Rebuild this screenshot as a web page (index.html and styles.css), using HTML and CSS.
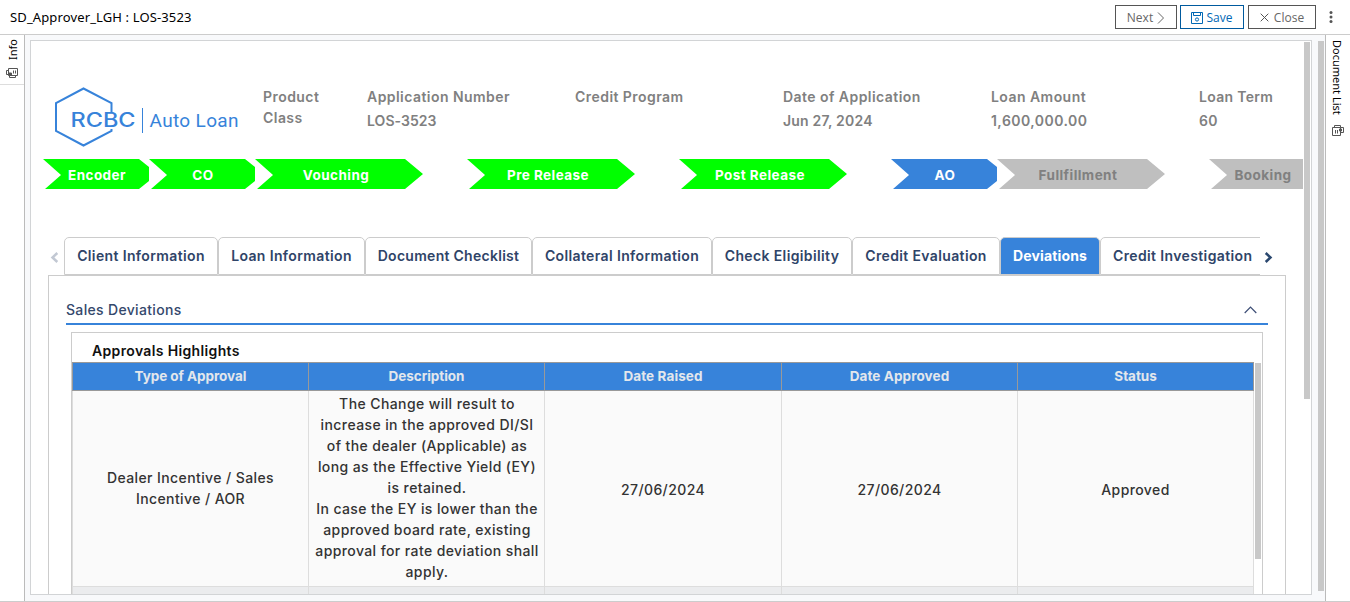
FILE: index.html
```html
<!DOCTYPE html>
<html lang="en">
<head>
<meta charset="utf-8">
<title>SD_Approver_LGH : LOS-3523</title>
<link rel="stylesheet" href="styles.css">
</head>
<body>
<header class="topbar">
  <h1 class="title">SD_Approver_LGH : LOS-3523</h1>
  <div class="actions">
    <button class="btn next"><span>Next</span><svg width="8" height="12" viewBox="0 0 8 12"><path d="M1 .5 6.5 6 1 11.5" fill="none" stroke="#666"/></svg></button>
    <button class="btn save"><svg width="12" height="12" viewBox="0 0 12 12" fill="none" stroke="#0068b5"><path d="M.5.5h11v11H.5zM2.5.5v3h7v-3"/><circle cx="6" cy="7.5" r="1.6"/></svg><span>Save</span></button>
    <button class="btn close"><svg width="9" height="9" viewBox="0 0 9 9"><path d="M.7.7l7.6 7.6M8.3.7.7 8.3" fill="none" stroke="#555"/></svg><span>Close</span></button>
    <svg class="more" width="4" height="12" viewBox="0 0 4 12" fill="#555"><circle cx="2" cy="1.6" r="1.5"/><circle cx="2" cy="6" r="1.5"/><circle cx="2" cy="10.4" r="1.5"/></svg>
  </div>
</header>
<div class="workspace">
  <aside class="side left">
    <div class="info-tab">
      <span class="vertical up">Info</span>
      <svg width="12" height="10" viewBox="0 0 12 10" fill="none" stroke="#555"><path d="M2.5.5h9v7h-9zM2.5 2.5h-2v4h3v3h6v-2M7.5 2.5v3M9.5 2.5v3"/><path d="M2.5 5h3v2h-3z" fill="#555"/></svg>
    </div>
  </aside>
  <main class="center">
    <div class="panel">
      <div class="content">
        <section class="summary">
          <svg class="logo" width="190" height="62" viewBox="0 0 190 62" role="img" aria-label="RCBC Auto Loan">
            <path d="M58.5 26V17L30.5 2.5 3 17v28l27.5 14.5L58.5 45v-2" fill="none" stroke="#3783da" stroke-width="2"/>
            <text class="logo-brand" x="17.5" y="41" textLength="65" lengthAdjust="spacingAndGlyphs">RCBC</text>
            <path d="M89.5 22v25" stroke="#3783da"/>
            <text class="logo-name" x="96.500" y="41" textLength="89">Auto Loan</text>
          </svg>
          <dl class="facts">
            <div class="f1"><dt>Product</dt><dd>Class</dd></div>
            <div class="f2"><dt>Application Number</dt><dd>LOS-3523</dd></div>
            <div class="f3"><dt>Credit Program</dt><dd></dd></div>
            <div class="f4"><dt>Date of Application</dt><dd>Jun 27, 2024</dd></div>
            <div class="f5"><dt>Loan Amount</dt><dd>1,600,000.00</dd></div>
            <div class="f6"><dt>Loan Term</dt><dd>60</dd></div>
          </dl>
        </section>
        <ol class="steps">
          <li class="step short done">Encoder</li>
          <li class="step short done">CO</li>
          <li class="step done">Vouching</li>
          <li class="step done">Pre Release</li>
          <li class="step done">Post Release</li>
          <li class="step short current">AO</li>
          <li class="step todo">Fullfillment</li>
          <li class="step short todo last">Booking</li>
        </ol>
        <nav class="tabs">
          <svg class="arrow" width="9" height="11" viewBox="0 0 9 11"><path d="M7.3 1 2.5 5.5 7.3 10" fill="none" stroke="#c2c8d3" stroke-width="2.5"/></svg>
          <div class="tab-strip">
            <a class="tab t1">Client Information</a>
            <a class="tab t2">Loan Information</a>
            <a class="tab t3">Document Checklist</a>
            <a class="tab t4">Collateral Information</a>
            <a class="tab t5">Check Eligibility</a>
            <a class="tab t6">Credit Evaluation</a>
            <a class="tab t7 active">Deviations</a>
            <a class="tab t8">Credit Investigation</a>
          </div>
          <svg class="arrow" width="9" height="11" viewBox="0 0 9 11"><path d="M1.7 1 6.5 5.5 1.7 10" fill="none" stroke="#2b486f" stroke-width="2.5"/></svg>
        </nav>
        <section class="tab-panel">
          <div class="section-head">
            <h2>Sales Deviations</h2>
            <svg width="13" height="8" viewBox="0 0 13 8"><path d="M.7 7 6.5 1.2 12.3 7" fill="none" stroke="#3c4d75" stroke-width="1.2"/></svg>
          </div>
          <div class="approvals">
            <h3>Approvals Highlights</h3>
            <div class="grid-wrap">
              <div class="grid">
                <div class="th first">Type of Approval</div><div class="th">Description</div><div class="th raised">Date Raised</div><div class="th raised">Date Approved</div><div class="th">Status</div>
                <div class="td type">Dealer Incentive / Sales<br>Incentive / AOR</div>
                <div class="td desc">The Change will result to<br>increase in the approved DI/SI<br>of the dealer (Applicable) as<br>long as the Effective Yield (EY)<br>is retained.<br>In case the EY is lower than the<br>approved board rate, existing<br>approval for rate deviation shall<br>apply.</div>
                <div class="td">27/06/2024</div>
                <div class="td">27/06/2024</div>
                <div class="td">Approved</div>
                <div class="td type alt"></div><div class="td alt"></div><div class="td alt"></div><div class="td alt"></div><div class="td alt"></div>
              </div>
              <div class="thumb grid-thumb"></div>
            </div>
          </div>
        </section>
      </div>
      <div class="thumb panel-thumb"></div>
    </div>
    <div class="thumb page-thumb"></div>
  </main>
  <aside class="side right">
    <span class="vertical">Document List</span>
    <svg width="12" height="11" viewBox="0 0 12 11" fill="none" stroke="#555"><path d="M.5 2.5h8v8h-8zM2.5 2.5v-2h6v2h3v5h-3M3.5 5v3.5M5.5 5v3.5"/><path d="M7.5 4h2v2h-2z" fill="#555"/></svg>
  </aside>
</div>
</body>
</html>
```
FILE: styles.css
```css
* { box-sizing: border-box; }
body, h1, h2, h3, dl, dd, ol { margin: 0; padding: 0; }
body { width: 1350px; height: 602px; overflow: hidden; background: #fff; display: flex; flex-direction: column; font-family: Inter, "Liberation Sans", sans-serif; font-size: 14px; }
svg { display: block; flex: none; }

.topbar { height: 35px; flex: none; display: flex; align-items: center; justify-content: space-between; padding: 0 17px 0 10px; border-bottom: 1px solid #ccc; font-family: "Noto Sans", sans-serif; }
.title { font-size: 13px; font-weight: 400; color: #000; line-height: 20px; letter-spacing: .13px; }
.actions { display: flex; align-items: center; gap: 3px; }
.btn { height: 24px; border: 1px solid #555; background: #fff; color: #666; font: 400 12px "Open Sans", sans-serif; display: flex; align-items: center; padding: 1px 0 0; justify-content: center; }
.btn.next { width: 62px; gap: 4px; }
.btn.save { width: 64px; gap: 4px; padding-right: 1px; color: #0068b5; border-color: #005a9e; }
.btn.close { width: 68px; gap: 5px; margin-left: 1px; }
.more { margin-left: 10px; }

.workspace { height: 567px; flex: none; display: flex; border-bottom: 1px solid #ccc; }
.side { width: 25px; flex: none; font: 11px "Noto Sans", sans-serif; display: flex; flex-direction: column; color: #000; }
.left { border-right: 1px solid #bbb; }
.right { border-left: 1px solid #bbb; align-items: flex-start; padding: 5px 0 0 6px; gap: 10px; }
.vertical { writing-mode: vertical-rl; line-height: 11px; }
.vertical.up { transform: rotate(180deg); }
.info-tab { height: 50px; border-bottom: 1px solid #ddd; display: flex; flex-direction: column; align-items: center; gap: 8px; padding-top: 4px; }

.center { width: 1300px; flex: none; background: #f8f9fb; display: flex; padding: 5px 0 6px 5px; }
.panel { width: 1282px; height: 555px; border: 1px solid #d2d4d6; background: #fff; display: flex; overflow: hidden; }
.content { width: 1272px; flex: none; height: 553px; overflow: hidden; padding-top: 45px; }
.thumb { width: 6px; background: #c8c8c8; flex: none; }
.panel-thumb { height: 357px; margin: 1px 0 0 1px; }
.page-thumb { height: 550px; margin: 1px 0 0 6px; }

.summary { height: 73px; display: flex; padding-left: 22px; }
.logo { width: 190px; }
.logo text { fill: #3783da; }
.logo-brand { font: 500 19.5px Inter, sans-serif; }
.logo-name { font: 400 19px Roboto, sans-serif; }
.facts { display: grid; grid-template-columns: 104px 208px 208px 208px 208px 104px; margin: 0 0 0 20px; color: #808080; font-weight: 600; font-size: 14px; line-height: 21px; letter-spacing: .45px; white-space: nowrap; }
.facts dd { padding-top: 3px; }
.facts .f1 dd { padding-top: 0; }
.facts .f1 { letter-spacing: .45px; }
.facts .f2 dd { letter-spacing: .05px; }
.facts .f4 dd { letter-spacing: .2px; }
.facts .f6 { letter-spacing: .3px; }

.steps { list-style: none; display: flex; height: 30px; margin-left: 12px; }
.step { width: 168px; margin-right: 44px; flex: none; line-height: 32px; padding-right: 6px; text-align: center; color: #fff; font-weight: 700; font-size: 13.5px; letter-spacing: .45px; clip-path: polygon(0 0, 150px 0, 168px 15px, 150px 30px, 2px 30px, 18px 16px); }
.step.short { width: 106px; margin-right: 0; padding: 0 0 0 2px; clip-path: polygon(0 0, 96px 0, 106px 8px, 106px 22px, 96px 30px, 2px 30px, 18px 16px); }
.step.last { clip-path: polygon(0 0, 106px 0, 106px 30px, 2px 30px, 18px 16px); }
.done { background: #0f0; }
.current { background: #3783da; }
.todo { background: #bfbfbf; color: #808080; }

.tabs { margin-top: 48px; height: 38px; display: flex; align-items: center; padding-left: 19px; }
.arrow { margin-top: 3px; }
.tab-strip { width: 1196px; flex: none; overflow: hidden; display: flex; margin: 0 4px 0 5px; }
.tab { height: 38px; flex: none; border: 1px solid #ccc; border-radius: 5px 5px 0 0; line-height: 36px; text-align: center; white-space: nowrap; color: #2f4468; font-weight: 600; font-size: 14px; letter-spacing: .37px; }
.t1 { width: 154px; } .t2 { width: 147px; } .t3 { width: 167px; letter-spacing: .28px; } .t4 { width: 180px; }
.t5 { width: 140px; } .t6 { width: 148px; } .t7 { width: 100px; } .t8 { width: 165px; text-align: left; padding-left: 12px; }
.tab.active { background: #3783da; color: #fff; font-weight: 700; letter-spacing: .15px; }

.tab-panel { margin-left: 17px; width: 1238px; height: 400px; border: 1px solid #ccc; padding: 20px 17px 0; }
.section-head { height: 29px; width: 1202px; border-bottom: 2px solid #3783da; display: flex; justify-content: space-between; padding: 3px 11px 0 0; }
.section-head h2 { font-size: 14px; font-weight: 500; line-height: 22px; color: #34486c; letter-spacing: .33px; }
.section-head svg { margin-top: 7px; }
.approvals { margin: 7px 0 0 5px; width: 1192px; height: 340px; border: 1px solid #ccc; }
.approvals h3 { padding: 7px 0 0 20px; height: 29px; line-height: 22px; font-size: 14px; font-weight: 600; color: #111; letter-spacing: .35px; }
.grid-wrap { display: flex; gap: 1px; }
.grid { width: 1182px; flex: none; display: grid; grid-template-columns: 237px 236px 237px 236px 236px; grid-template-rows: 29px 196px 40px; }
.th { border: 1px solid #999; border-left-width: 0; background: #3783da; color: #e3e7ec; font-weight: 700; font-size: 13.5px; letter-spacing: -.05px; display: flex; align-items: center; justify-content: center; padding-bottom: 1px; }
.th.raised { letter-spacing: .1px; }
.td { border: 1px solid #ddd; border-width: 0 1px 1px 0; background: #fafafa; color: #333; font-weight: 500; line-height: 21px; font-size: 14px; letter-spacing: .4px; text-align: center; display: flex; align-items: center; justify-content: center; white-space: nowrap; padding: 1px 0 0; }
.th.first, .td.type { border-left-width: 1px; }
.td.type { padding: 0 0 1px; }
.td.desc { padding: 0 0 3px 1px; }
.td.alt { background: #ebecee; }
.grid-thumb { height: 196px; margin-top: 1px; }
```
